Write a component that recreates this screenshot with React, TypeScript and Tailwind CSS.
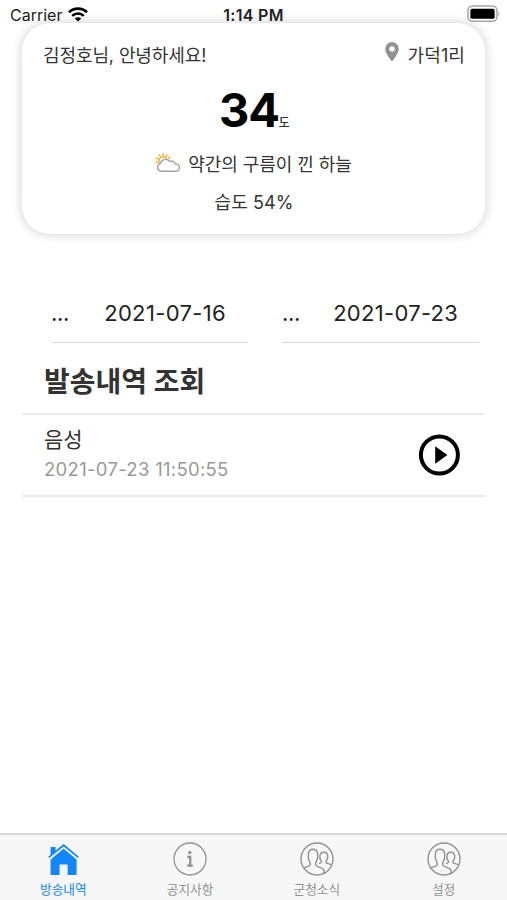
import type { ReactNode } from "react";

function WifiIcon() {
  return (
    <svg width="20" height="15" viewBox="0 0 20 15" className="ml-[6px] mt-[7px]" fill="none" stroke="#000">
      <path d="M1 5.2C6 .4 14 .4 19 5.2" strokeWidth="2.7" />
      <path d="M4.2 8.8C7.4 5.7 12.6 5.7 15.8 8.8" strokeWidth="2.5" />
      <path d="M10 14.6 6.8 11.4C8.6 9.8 11.4 9.8 13.2 11.4Z" fill="#000" stroke="none" />
    </svg>
  );
}

function StatusBar() {
  return (
    <header className="grid h-[23px] grid-cols-3 items-start text-[16px] leading-[30px] text-[#222]">
      <div className="flex items-start pl-[10px]">
        <span>Carrier</span>
        <WifiIcon />
      </div>
      <span className="text-center font-semibold tracking-[0.3px]">1:14 PM</span>
      <div className="flex justify-end pr-[7px] pt-[5px]">
        <svg width="33" height="18" viewBox="0 0 33 18">
          <rect x="1" y="1" width="29" height="15.3" rx="4.5" fill="#fff" stroke="#a5a5a5" strokeWidth="1.5" />
          <rect x="3.4" y="3.8" width="24.2" height="10" rx="1.6" fill="#000" />
          <path d="M31.5 6.8c1.6.5 1.6 3.6 0 4.1Z" fill="#aaa" />
        </svg>
      </div>
    </header>
  );
}

function SunCloud() {
  return (
    <svg width="26" height="22" viewBox="0 0 26 22" className="-mt-[5px]" fill="none">
      <g stroke="#f3b34b" strokeWidth="1.5">
        <path d="M8 1v3M3.7 2.4l1.8 2.5M.8 6l2.9 1M.5 10.8l3.1-.8M2 14.5l2.5-1.8M12.2 2.2l-1.5 2.7M15.5 5l-2.6 1.5" />
        <path d="M5.6 12.4A4.2 4.2 0 1 1 12 7.5" />
      </g>
      <path d="M6.2 19.2a4 4 0 0 1-.7-7.8C6 7.5 11.5 5.8 14.7 9.3c3-.9 5 .7 5.4 2.6 5.4-.5 5.9 7.3.7 7.3Z" fill="#fff" stroke="#a2a2a2" strokeWidth="1.4" />
    </svg>
  );
}

function WeatherCard() {
  return (
    <section className="relative mx-[22px] flex h-[211px] flex-col rounded-[28px] bg-white px-[20px] text-[18px] text-[#333] shadow-[0_0_12px_rgba(0,0,0,0.2)]">
      <div className="mt-[19px] flex h-[28px] items-center justify-between leading-[28px]">
        <span className="pl-[1px] tracking-[-0.1px]">김정호님, 안녕하세요!</span>
        <span className="flex items-center">
          <svg width="14" height="20" viewBox="0 0 14 20" className="mr-[9px] -mt-[8px]">
            <path fillRule="evenodd" d="M7 0a6.8 6.8 0 0 0-6.8 6.8C.2 12 7 19.5 7 19.5s6.8-7.5 6.8-12.7A6.8 6.8 0 0 0 7 0Zm0 4.2a2.7 2.7 0 1 1 0 5.4 2.7 2.7 0 0 1 0-5.4Z" fill="#929292" />
          </svg>
          <span className="tracking-[0.1px]">가덕1리</span>
        </span>
      </div>
      <div className="mt-[10px] flex h-[60px] items-baseline justify-center pl-[2px] leading-[60px] text-black">
        <span className="text-[47px] font-bold tracking-[-1.2px]">34</span>
        <span className="text-[12px] font-medium text-[#333]">도</span>
      </div>
      <div className="mt-[11px] flex h-[28px] items-center justify-center leading-[28px]">
        <SunCloud />
        <span className="ml-[7px] tracking-[-0.05px]">약간의 구름이 낀 하늘</span>
      </div>
      <div className="mt-[10px] h-[28px] pl-[1px] text-center leading-[28px] tracking-[0.1px]">습도 54%</div>
    </section>
  );
}

function DateField({ value, gap }: { value: string; gap: string }) {
  return (
    <div className="flex h-[60px] w-[197px] items-center border-b border-[#d8d8d8] pt-[1px] text-[22px] text-[#222]">
      <span className="tracking-[-0.3px]">...</span>
      <span className={gap}>{value}</span>
    </div>
  );
}

function HomeIcon() {
  return (
    <svg width="34" height="34" viewBox="0 0 34 34" fill="#1286fa">
      <g transform="translate(0.6 1)">
        <path d="M4 4h5v4L4 12.5Z" />
        <path d="M17 5.5 30 16.5V32h-9V21.5h-8V32H4V16.5Z" />
        <path d="m2.2 14.4L17 2.2l14.8 12.2" fill="none" stroke="#1286fa" strokeWidth="1.8" />
        <path d="m2.8 16.2L17 4.5l14.2 11.7" fill="none" stroke="#f7f7f7" strokeWidth="1.1" />
      </g>
    </svg>
  );
}

function InfoIcon() {
  return (
    <svg width="34" height="34" viewBox="0 0 34 34" fill="none" stroke="#919191">
      <circle cx="17" cy="17" r="16" strokeWidth="1.3" />
      <circle cx="16.8" cy="10.6" r="1.7" fill="#919191" stroke="none" />
      <path d="M14.3 14.8h2.9v8.6M14.2 23.7h5.6" strokeWidth="2.3" />
    </svg>
  );
}

function PeopleIcon() {
  return (
    <svg width="34" height="34" viewBox="0 0 34 34" fill="none" stroke="#919191" strokeWidth="1.4">
      <circle cx="17" cy="17" r="16" />
      <path d="M4 25.8c2.2-1.1 5.3-1.3 6-2.7.5-1 .1-2.5-.3-3.6-1.5-1.7-1.5-5.5-1.2-8C8.8 8.8 10.4 7.2 13 7.2s4.3 1.6 4.6 4.3c.2 2.5.1 6.1-1.4 8-.5 1.2-.9 2.7-.3 3.8.8 1.6 6.6 2.2 7.7 4.3.5 1 .6 2.5.6 3.8" />
      <path d="M18.9 21.6c1.5-.5 2.4-.6 2.6-1.5.2-.7-.1-1.2-.7-1.8-1-1.3-1.1-2.6-.9-4.4.1-2.4 1.6-3.7 3.8-3.7s3.8 1.3 4 3.7c.1 1.9-.1 3.3-1.2 4.5-.5.7-.8 1.6-.4 2.2.5.9 3.8 1 5 2.2" />
    </svg>
  );
}

function Tab({ label, icon, active = false }: { label: string; icon: ReactNode; active?: boolean }) {
  return (
    <div className={`flex flex-1 flex-col items-center pt-[7px] text-[12.7px] leading-[18px] ${active ? "text-[#1286fa]" : "text-[#919191]"}`}>
      {icon}
      <span className="mt-[5px]">{label}</span>
    </div>
  );
}

export default function App() {
  return (
    <div className="flex h-[900px] w-[507px] flex-col overflow-hidden bg-white font-[Inter,'Noto_Sans_CJK_KR',sans-serif]">
      <div className="relative z-10">
        <StatusBar />
      </div>
      <WeatherCard />
      <main className="flex flex-1 flex-col">
        <div className="mt-[49px] flex gap-[34px] pl-[51px]">
          <DateField value="2021-07-16" gap="ml-[35px] tracking-[0.35px]" />
          <DateField value="2021-07-23" gap="ml-[33px] tracking-[0.3px]" />
        </div>
        <h1 className="mt-[19px] h-[40px] pl-[44px] text-[28px] font-bold leading-[40px] text-[#333]">발송내역 조회</h1>
        <div className="mx-[22px] mt-[11px] flex h-[84px] items-center justify-between border-y-2 border-[#ebebeb] pl-[22px] pr-[25px]">
          <div>
            <div className="h-[29px] text-[21px] leading-[28px] text-[#333]">음성</div>
            <div className="h-[30px] text-[18.5px] leading-[29px] tracking-[0.3px] text-[#999]">2021-07-23 11:50:55</div>
          </div>
          <svg width="42" height="42" viewBox="0 0 42 42">
            <circle cx="21.4" cy="21" r="18.5" fill="none" stroke="#000" strokeWidth="4" />
            <path d="M17.2 12.2 29.4 21l-12.2 8.8Z" fill="#000" />
          </svg>
        </div>
      </main>
      <nav className="flex h-[67px] border-t-2 border-[#d9d9d9] bg-[#f7f7f7]">
        <Tab label="방송내역" icon={<HomeIcon />} active />
        <Tab label="공지사항" icon={<InfoIcon />} />
        <Tab label="군청소식" icon={<PeopleIcon />} />
        <Tab label="설정" icon={<PeopleIcon />} />
      </nav>
    </div>
  );
}
